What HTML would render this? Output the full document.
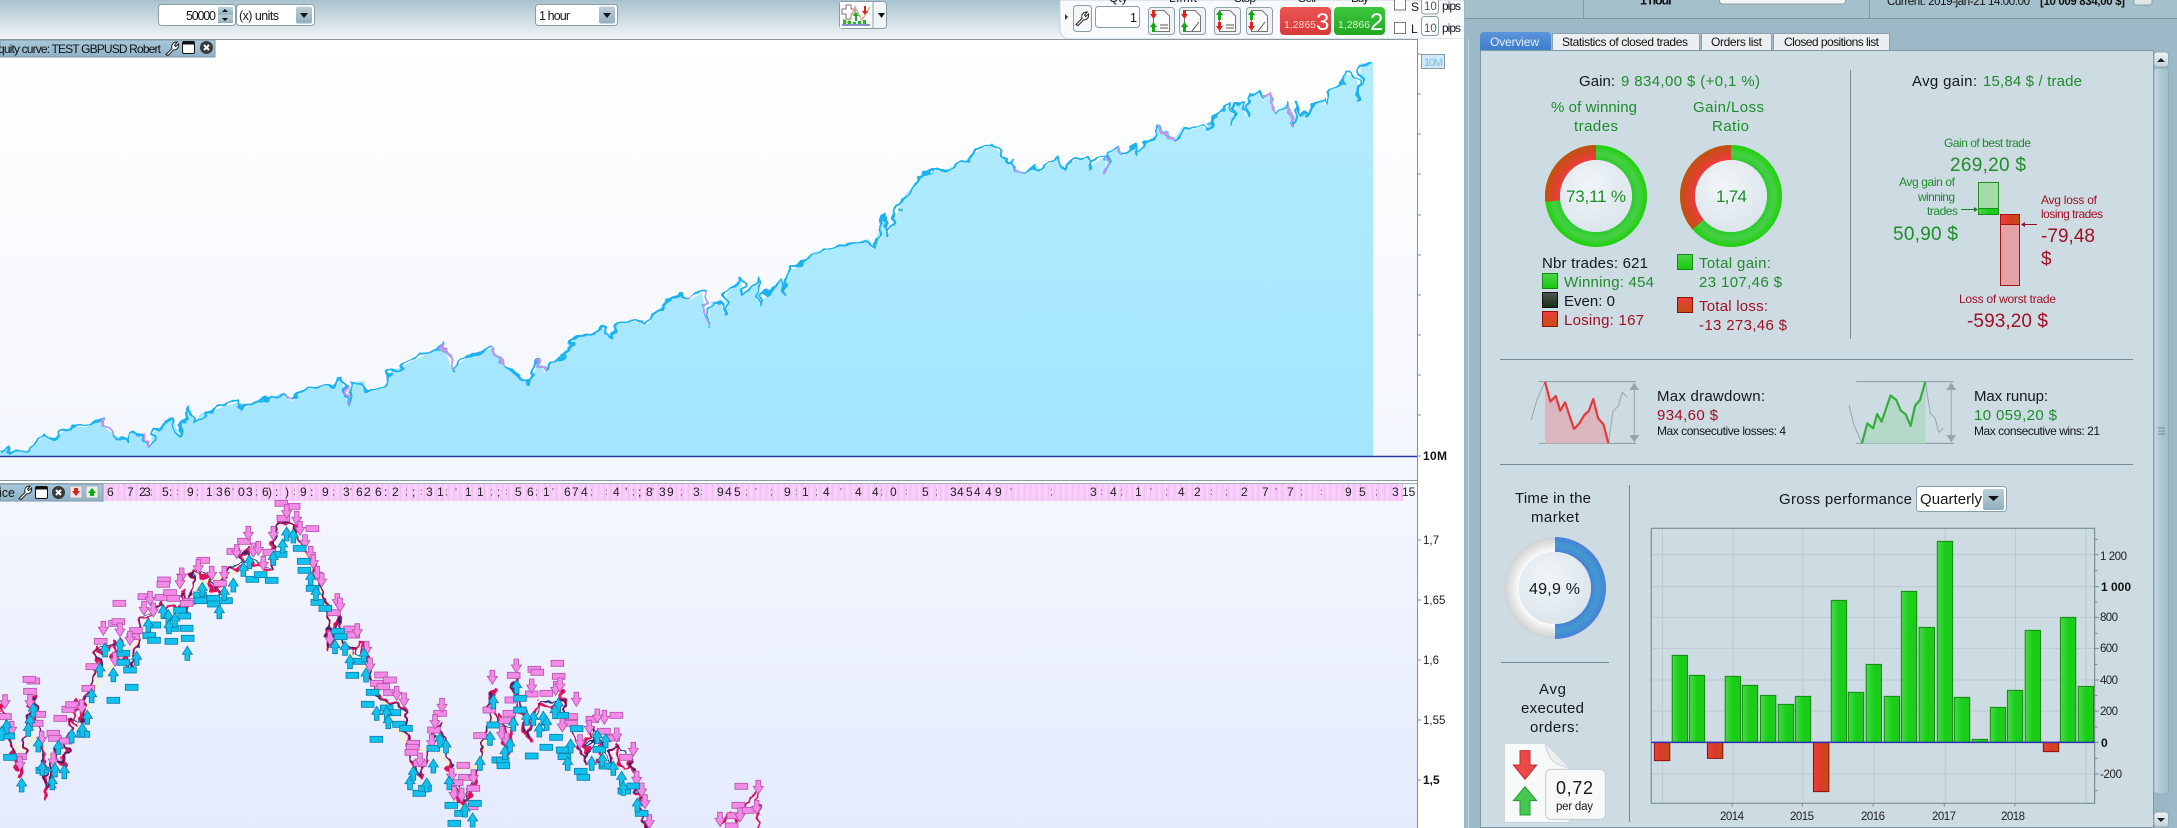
<!DOCTYPE html>
<html><head><meta charset="utf-8"><title>Equity curve report</title>
<style>
html,body{margin:0;padding:0;background:#fff;width:2177px;height:828px;overflow:hidden}
svg{display:block;font-family:"Liberation Sans",Arial,sans-serif}
.g{fill:#1f8c2a}.r{fill:#a01024}.k{fill:#14181c}
.m{font-size:15px}.s{font-size:12px}.b{font-size:19px}.a{font-size:11.5px;fill:#222}
</style></head><body>
<svg width="2177" height="828" viewBox="0 0 2177 828" xmlns="http://www.w3.org/2000/svg">
<defs>
<filter id="jit" filterUnits="userSpaceOnUse" x="0" y="40" width="1417" height="440" color-interpolation-filters="sRGB"><feTurbulence type="fractalNoise" baseFrequency=".07 .09" numOctaves="2" seed="4" result="n"/><feDisplacementMap in="SourceGraphic" in2="n" scale="14" xChannelSelector="R" yChannelSelector="G"/></filter>
<filter id="jit2" filterUnits="userSpaceOnUse" x="-30" y="0" width="2400" height="1100" color-interpolation-filters="sRGB"><feTurbulence type="fractalNoise" baseFrequency=".025 .03" numOctaves="2" seed="9" result="n"/><feDisplacementMap in="SourceGraphic" in2="n" scale="50" xChannelSelector="R" yChannelSelector="G"/></filter>
<linearGradient id="tb" x1="0" y1="0" x2="0" y2="1"><stop offset="0" stop-color="#a7c2ce"/><stop offset="1" stop-color="#f3f6f8"/></linearGradient>
<linearGradient id="c1" x1="0" y1="0" x2="0" y2="1"><stop offset="0" stop-color="#ffffff"/><stop offset="1" stop-color="#f3f6fd"/></linearGradient>
<linearGradient id="c2" x1="0" y1="0" x2="0" y2="1"><stop offset="0" stop-color="#f5f7ff"/><stop offset="1" stop-color="#e4ebfd"/></linearGradient>
<linearGradient id="ar" x1="0" y1="0" x2="0" y2="1"><stop offset="0" stop-color="#b3ecff"/><stop offset="1" stop-color="#a3e6ff"/></linearGradient>
<linearGradient id="tt" x1="0" y1="0" x2="0" y2="1"><stop offset="0" stop-color="#a8c8da"/><stop offset="1" stop-color="#8fb2c8"/></linearGradient>
<linearGradient id="sb" x1="0" y1="0" x2="0" y2="1"><stop offset="0" stop-color="#bdd0da"/><stop offset="1" stop-color="#8fafbf"/></linearGradient>
<linearGradient id="ov" x1="0" y1="0" x2="0" y2="1"><stop offset="0" stop-color="#5b95dc"/><stop offset="1" stop-color="#3e7ccc"/></linearGradient>
<linearGradient id="gb" x1="0" y1="0" x2="1" y2="0"><stop offset="0" stop-color="#4ad84a"/><stop offset=".5" stop-color="#17cf17"/><stop offset="1" stop-color="#22c81e"/></linearGradient>
<linearGradient id="rb" x1="0" y1="0" x2="1" y2="0"><stop offset="0" stop-color="#ee3c3c"/><stop offset=".5" stop-color="#d83a28"/><stop offset="1" stop-color="#c25010"/></linearGradient>
<linearGradient id="gv" x1="0" y1="0" x2="0" y2="1"><stop offset="0" stop-color="#4ad84a"/><stop offset="1" stop-color="#16c810"/></linearGradient>
<linearGradient id="rv" x1="0" y1="0" x2="0" y2="1"><stop offset="0" stop-color="#ee3c3c"/><stop offset="1" stop-color="#c25010"/></linearGradient>
<linearGradient id="kv" x1="0" y1="0" x2="0" y2="1"><stop offset="0" stop-color="#555"/><stop offset="1" stop-color="#103010"/></linearGradient>
<linearGradient id="sell" x1="0" y1="0" x2="0" y2="1"><stop offset="0" stop-color="#ec5454"/><stop offset="1" stop-color="#d83a3a"/></linearGradient>
<linearGradient id="buy" x1="0" y1="0" x2="0" y2="1"><stop offset="0" stop-color="#3ec83e"/><stop offset="1" stop-color="#22a822"/></linearGradient>
<linearGradient id="sc" x1="0" y1="0" x2="1" y2="0"><stop offset="0" stop-color="#c4d9e2"/><stop offset=".5" stop-color="#a9c8d4"/><stop offset="1" stop-color="#9dbecb"/></linearGradient>
<linearGradient id="sbt" x1="0" y1="0" x2="0" y2="1"><stop offset="0" stop-color="#eef3f6"/><stop offset="1" stop-color="#c0d2da"/></linearGradient>
<radialGradient id="g1" gradientUnits="userSpaceOnUse" cx="1596" cy="196" r="51"><stop offset=".7" stop-color="#2ccb2c"/><stop offset=".84" stop-color="#46cf46"/><stop offset="1" stop-color="#1ed008"/></radialGradient>
<radialGradient id="r1" gradientUnits="userSpaceOnUse" cx="1596" cy="196" r="51"><stop offset=".7" stop-color="#ee3a40"/><stop offset="1" stop-color="#c0520c"/></radialGradient>
<radialGradient id="g2" gradientUnits="userSpaceOnUse" cx="1731" cy="196" r="51"><stop offset=".7" stop-color="#2ccb2c"/><stop offset=".84" stop-color="#46cf46"/><stop offset="1" stop-color="#1ed008"/></radialGradient>
<radialGradient id="r2" gradientUnits="userSpaceOnUse" cx="1731" cy="196" r="51"><stop offset=".7" stop-color="#ee3a40"/><stop offset="1" stop-color="#c0520c"/></radialGradient>
<radialGradient id="bl" gradientUnits="userSpaceOnUse" cx="1555" cy="588" r="51"><stop offset=".7" stop-color="#4a80d4"/><stop offset=".84" stop-color="#3f9ad0"/><stop offset="1" stop-color="#4a7fd8"/></radialGradient>
<radialGradient id="gr" gradientUnits="userSpaceOnUse" cx="1555" cy="588" r="51"><stop offset=".7" stop-color="#fdfdfd"/><stop offset=".84" stop-color="#e6e7e8"/><stop offset="1" stop-color="#cdd0d3"/></radialGradient>
<radialGradient id="ce" cx=".4" cy=".35" r=".75"><stop offset="0" stop-color="#f1f5f8"/><stop offset="1" stop-color="#d8e3ea"/></radialGradient>
<pattern id="st" width="6" height="17" patternUnits="userSpaceOnUse"><rect width="6" height="17" fill="#f6cdf8"/><rect x="1" width="1" height="17" fill="#fadcfb"/><rect x="4" width="1" height="17" fill="#f2bff3"/></pattern>
<g id="pr"><rect x="-19" y="-9" width="38" height="18" fill="#f28ae6" stroke="#b652ae" stroke-width="2.5"/></g>
<g id="cr"><rect x="-19" y="-9" width="38" height="18" fill="#12c2ee" stroke="#0c7fa8" stroke-width="2.5"/></g>
<g id="dn"><polygon points="-7,-21 7,-21 7,-3 15,-3 0,21 -15,-3 -7,-3" fill="#f28ae6" stroke="#b652ae" stroke-width="2.5"/></g>
<g id="up"><polygon points="-7,21 7,21 7,3 15,3 0,-21 -15,3 -7,3" fill="#12c2ee" stroke="#0c7fa8" stroke-width="2.5"/></g>
<g id="wr"><path d="M1 13.5 L7 7.5 C6 4 8 .8 12.2 1 L9.6 4 L10.6 5.6 L13.6 3 C14 7 11.2 9.4 8.6 8.8 L3 14.6 Z" fill="#fff" stroke="#222" stroke-width="1"/></g>
<g id="wn"><rect x=".5" y=".5" width="12" height="12" rx="1.5" fill="#fff" stroke="#111"/><rect x=".5" y=".5" width="12" height="3" fill="#111"/></g>
<g id="cl"><circle cx="6.5" cy="6.5" r="6.5" fill="#3a3a3a"/><path d="M4 4 L9 9 M9 4 L4 9" stroke="#fff" stroke-width="2"/></g>
<g id="dc"><rect x=".5" y=".5" width="26" height="27" rx="3" fill="#eef2f4" stroke="#8ea0aa"/><path d="M5.500 3.500 H16 L21.500 9 V24.500 H5.500 Z" fill="#fff" stroke="#777"/></g>
</defs>

<!-- Top toolbar -->
<rect width="1062" height="39" fill="url(#tb)"/>
<path d="M1060 0 V30 Q1060 36 1067 39 H1465 V0 Z" fill="#f8fafb" stroke="#c8d2d8"/>
<rect x="158.500" y="4.500" width="77" height="21" rx="3" fill="#fff" stroke="#8b9ea8"/>
<text x="186" y="20" font-size="12.500" textLength="30" class="k">50000</text>
<rect x="218" y="7" width="15" height="8" fill="url(#sb)"/><rect x="218" y="15" width="15" height="8" fill="url(#sb)"/>
<path d="M222 12 l3-3 3 3Z M222 18 l3 3 3-3Z" fill="#111"/>
<rect x="236.500" y="4.500" width="78" height="21" rx="3" fill="#fff" stroke="#8b9ea8"/>
<text x="239" y="20" font-size="12.500" textLength="40" class="k">(x) units</text>
<rect x="296" y="6.500" width="16" height="17" rx="2" fill="url(#sb)"/><path d="M300 13 h8 l-4 5Z" fill="#111"/>
<rect x="535.500" y="4.500" width="82" height="21" rx="3" fill="#fff" stroke="#8b9ea8"/>
<text x="539" y="20" font-size="12.500" textLength="31" class="k">1 hour</text>
<rect x="599" y="6.500" width="16" height="17" rx="2" fill="url(#sb)"/><path d="M603 13 h8 l-4 5Z" fill="#111"/>
<rect x="839.500" y="1.500" width="47" height="27" rx="3" fill="#f2f5f6" stroke="#8b9ea8"/>
<rect x="840" y="2" width="33" height="26" fill="#fbfcfc"/>
<line x1="873" y1="2" x2="873" y2="28" stroke="#8b9ea8"/>
<path d="M878 13 h7 l-3.500 5Z" fill="#111"/>
<path d="M846 5 h5 v4 h4 v5 h-4 v5 h-5 v-5 h-4 v-5 h4Z" fill="#fff" stroke="#777"/>
<path d="M843 19 L848 23 L855 7 L862 20 L870 7" fill="none" stroke="#d8b090" stroke-width="1.500"/>
<path d="M856 21 v-6" stroke="#2a2" stroke-width="2"/><path d="M853 16 l3-4 3 4Z" fill="#2a2"/>
<path d="M865 6 v6" stroke="#d22" stroke-width="2"/><path d="M862 11 l3 4 3-4Z" fill="#d22"/>
<path d="M843 24 h3 v-4 h-3Z M848 24 h3 v-3 h-3Z M853 24 h3 v-2 h-3Z M858 24 h3 v-3 h-3Z M863 24 h3 v-4 h-3Z" fill="#2b2"/>
<line x1="842" y1="25" x2="870" y2="25" stroke="#22a"/>

<!-- Trade controls -->
<text x="1109" y="2" font-size="12" class="k">Qty</text>
<text x="1169" y="2" font-size="12" textLength="28" class="k">Limit</text>
<text x="1234" y="2" font-size="12" textLength="22" class="k">Stop</text>
<text x="1298" y="2" font-size="12" textLength="18" class="k">Sell</text>
<text x="1351" y="2" font-size="12" textLength="18" class="k">Buy</text>
<path d="M1065 14 l3 3 -3 3Z" fill="#333"/>
<rect x="1073.500" y="5.500" width="18" height="26" rx="3" fill="#f4f7f9" stroke="#8b9ea8"/>
<use href="#wr" x="1075" y="11"/>
<rect x="1095.500" y="6.500" width="44" height="21" rx="3" fill="#fff" stroke="#8b9ea8"/>
<text x="1130" y="22" font-size="12.500" class="k">1</text>
<use href="#dc" x="1148" y="7"/><use href="#dc" x="1179" y="7"/><use href="#dc" x="1214" y="7"/><use href="#dc" x="1246" y="7"/>
<path d="M1152 10 h3 v4 h2 l-3.500 5 -3.500-5 h2Z M1183 10 h3 v4 h2 l-3.500 5 -3.500-5 h2Z M1218 22 h3 v4 h2 l-3.500 5 -3.500-5 h2Z M1250 22 h3 v4 h2 l-3.500 5 -3.500-5 h2Z" fill="#d22"/>
<path d="M1152 32 h3 v-5 h2 l-3.500-5 -3.500 5 h2Z M1183 32 h3 v-5 h2 l-3.500-5 -3.500 5 h2Z M1218 20 h3 v-5 h2 l-3.500-5 -3.500 5 h2Z M1250 20 h3 v-5 h2 l-3.500-5 -3.500 5 h2Z" fill="#1a1"/>
<path d="M1160 25 h8 M1160 28 h8 M1226 25 h8 M1226 28 h8 M1192 31 l7-9 M1258 31 l7-9" stroke="#555" fill="none"/>
<rect x="1280" y="7" width="51" height="28" rx="4" fill="url(#sell)"/>
<text x="1284" y="28" font-size="10.500" fill="#fadada" textLength="32">1,2865</text>
<text x="1316" y="30" font-size="24" fill="#fff" textLength="13">3</text>
<rect x="1334" y="7" width="51" height="28" rx="4" fill="url(#buy)"/>
<text x="1338" y="28" font-size="10.500" fill="#d8f5d8" textLength="32">1,2866</text>
<text x="1370" y="30" font-size="24" fill="#fff" textLength="13">2</text>
<rect x="1394.500" y="-1" width="11" height="11" fill="#fff" stroke="#777"/>
<rect x="1394.500" y="22.500" width="11" height="11" fill="#fff" stroke="#777"/>
<text x="1411" y="11" font-size="12" class="k">S</text><text x="1411" y="33" font-size="12" class="k">L</text>
<rect x="1421.500" y="-6" width="17" height="20" rx="3" fill="#fff" stroke="#8b9ea8"/>
<rect x="1421.500" y="16.500" width="17" height="19" rx="3" fill="#fff" stroke="#8b9ea8"/>
<text x="1424" y="10" font-size="11.500" fill="#555">10</text><text x="1424" y="32" font-size="11.500" fill="#555">10</text>
<text x="1442" y="10" font-size="12" class="k" textLength="19">pips</text><text x="1442" y="32" font-size="12" class="k" textLength="19">pips</text>

<!-- Chart 1 -->
<rect x="0" y="40" width="1417" height="440" fill="url(#c1)"/>
<line x1="0" y1="39.500" x2="1417" y2="39.500" stroke="#8a98a0"/>
<path id="eq" fill="url(#ar)" d="M0 456 L0 453 6 447 11 452 29 450 45 435 54 438 70 427 86 427 101 420 105 428 115 435 128 442 131 433 140 433 150 447 153 433 172 418 180 437 188 409 195 422 201 413 217 409 239 402 242 409 268 398 284 393 292 402 306 388 332 385 341 378 348 405 351 382 364 381 367 392 386 385 390 372 421 357 443 344 452 370 459 363 475 353 491 348 504 365 515 373 529 382 539 362 545 373 548 363 564 357 574 340 606 328 611 340 617 323 641 321 647 325 660 308 676 295 681 293 689 300 702 293 707 323 711 302 721 300 724 315 727 293 740 278 743 293 760 278 759 305 781 278 784 292 788 270 797 268 813 252 823 250 845 245 868 239 872 250 885 215 888 235 905 195 923 174 945 170 965 160 980 150 992 143 1000 153 1007 163 1012 162 1015 169 1025 172 1037 165 1040 170 1058 157 1063 171 1075 160 1088 158 1090 166 1105 156 1106 174 1107 152 1117 146 1123 156 1133 145 1136 152 1155 135 1158 128 1173 138 1177 135 1183 126 1190 130 1203 126 1205 129 1223 110 1230 105 1234 120 1235 106 1243 105 1246 117 1251 93 1259 92 1263 101 1270 93 1275 114 1287 103 1294 127 1296 103 1300 116 1305 111 1307 116 1310 110 1322 98 1325 106 1330 90 1342 85 1344 75 1350 75 1357 80 1359 103 1361 63 1373 62 L1373 456 Z"/>
<g filter="url(#jit)">
<polyline fill="none" stroke="#1cb2ee" stroke-width="2.400" stroke-linejoin="round" points="0,453 6,447 11,452 29,450 45,435 54,438 70,427 86,427 101,420 105,428 115,435 128,442 131,433 140,433 150,447 153,433 172,418 180,437 188,409 195,422 201,413 217,409 239,402 242,409 268,398 284,393 292,402 306,388 332,385 341,378 348,405 351,382 364,381 367,392 386,385 390,372 421,357 443,344 452,370 459,363 475,353 491,348 504,365 515,373 529,382 539,362 545,373 548,363 564,357 574,340 606,328 611,340 617,323 641,321 647,325 660,308 676,295 681,293 689,300 702,293 707,323 711,302 721,300 724,315 727,293 740,278 743,293 760,278 759,305 781,278 784,292 788,270 797,268 813,252 823,250 845,245 868,239 872,250 885,215 888,235 905,195 923,174 945,170 965,160 980,150 992,143 1000,153 1007,163 1012,162 1015,169 1025,172 1037,165 1040,170 1058,157 1063,171 1075,160 1088,158 1090,166 1105,156 1106,174 1107,152 1117,146 1123,156 1133,145 1136,152 1155,135 1158,128 1173,138 1177,135 1183,126 1190,130 1203,126 1205,129 1223,110 1230,105 1234,120 1235,106 1243,105 1246,117 1251,93 1259,92 1263,101 1270,93 1275,114 1287,103 1294,127 1296,103 1300,116 1305,111 1307,116 1310,110 1322,98 1325,106 1330,90 1342,85 1344,75 1350,75 1357,80 1359,103 1361,63 1373,62"/>
<path fill="none" stroke="#ee88e8" stroke-width="1.600" d="M101 420 L105 428 115 435 M143 434 L150 447 M292 402 L286 395 M345 385 L348 405 M443 344 L452 370 M491 348 L504 365 M539 362 L545 373 M689 300 L695 297 M702 293 L707 323 M1158 128 L1173 138 M1263 101 L1270 93 L1275 114 M1287 103 L1294 127 M1105 156 L1106 174 M1123 156 L1117 146 M1015 169 L1025 172"/>
</g>
<line x1="0" y1="456.500" x2="1417" y2="456.500" stroke="#2a3aa2" stroke-width="1.500"/>
<rect x="0" y="40" width="215" height="17" fill="url(#tt)"/><rect x="0" y="40" width="215" height="17" fill="none" stroke="#7d97a8"/>
<text x="-2" y="53" font-size="12" fill="#111" textLength="163">quity curve: TEST GBPUSD Robert</text>
<use href="#wr" x="165" y="41"/><use href="#wn" x="182" y="41"/><use href="#cl" x="200" y="41"/>

<!-- Chart 2 -->
<rect x="0" y="481" width="1417" height="3" fill="#fff"/>
<line x1="0" y1="480.500" x2="1417" y2="480.500" stroke="#8a98a0"/>
<rect x="0" y="484" width="1417" height="344" fill="url(#c2)"/>
<line x1="0" y1="483.500" x2="1417" y2="483.500" stroke="#a5b2ba"/>
<rect x="103" y="484" width="1300" height="17" fill="url(#st)"/>
<rect x="0" y="484" width="103" height="17" fill="url(#tt)" stroke="#7d97a8"/>
<text x="-1" y="497" font-size="12.500" fill="#111">ice</text>
<use href="#wr" x="18" y="485"/><use href="#wn" x="35" y="486"/><use href="#cl" x="52" y="486"/>
<rect x="70" y="486" width="12" height="12" rx="1" fill="#f2e6e6" stroke="#aab"/><path d="M74 488 h4 v3 h2 l-4 5 -4-5 h2Z" fill="#d22"/>
<rect x="86" y="486" width="12" height="12" rx="1" fill="#e8f2e8" stroke="#aab"/><path d="M90 496 h4 v-3 h2 l-4-5 -4 5 h2Z" fill="#1a1"/>
<text y="496" font-size="12" fill="#222" x="107 127 139 144 162 169 187 206 216 224 238 246 262 268 275 285 300 310 322 343 356 364 375 384 392 412 426 437 465 477 497 515 527 543 564 572 581 596 613 625 638 646 659 667 693 717 725 734 784 802 823 855 872 890 922 950 957 966 974 985 995 1032 1090 1110 1135 1178 1194 1241 1262 1287 1345 1359 1392">67235:9136036):)9:93626:2;3111;561674 4';83939459144405345449 34142277953 15</text>
<text y="495" font-size="10" fill="#555" x="150 176 196 232 255 293 332 350 405 420 445 455 490 505 535 552 590 605 632 652 680 700 745 755 770 795 815 840 880 905 935 1010 1050 1100 1120 1150 1165 1210 1225 1275 1300 1320 1375">;:;';:;';:;';:;';:;';:;';:;';:;';:;';:;';:;</text>

<g transform="translate(0,470) scale(.33333)">
<polyline fill="none" stroke="#f6eea0" stroke-width="4" points="30,770 60,860 100,800 150,860 190,830 260,720 300,620 400,530 480,440 560,420 600,340 700,310 800,270 880,170 960,350 1000,500 1100,600 1150,690 1230,850 1300,830 1360,900 1440,890 1480,740"/>
<g filter="url(#jit2)">
<polyline fill="none" stroke="#e0105a" stroke-width="8" stroke-linejoin="round" points="0,720 10,690 20,745 30,800 45,880 55,920 65,860 75,830 85,720 100,680 108,760 120,800 132,850 145,990 155,880 165,830 178,860 190,890 200,800 210,750 222,770 230,690 250,750 265,680 280,620 295,530 310,560 330,520 345,570 360,510 375,580 395,610 410,520 430,440 450,450 480,400 500,430 520,410 535,420 545,350 565,440 585,290 605,330 620,310 635,360 650,370 670,330 690,290 710,300 740,240 760,290 780,290 795,300 810,300 822,210 835,150 860,170 880,160 900,200 915,240 940,300 970,360 985,430 990,540 1003,470 1015,440 1030,520 1045,530 1060,540 1080,515 1100,560 1115,620 1130,680 1160,690 1190,700 1215,720 1225,870 1245,900 1260,925 1285,860 1300,800 1325,750 1340,850 1350,900 1370,980 1390,1000 1415,960 1440,880 1458,780 1475,650 1490,760 1505,740 1525,860 1540,780 1548,630 1565,740 1585,810 1600,720 1620,700 1650,720 1680,670 1700,740 1730,800 1750,885 1765,800 1785,770 1805,880 1825,890 1850,820 1870,900 1895,880 1915,980 1940,1074"/>
<polyline fill="none" stroke="#e0105a" stroke-width="8" points="2160,1074 2185,1030 2210,1060 2270,940 2275,1074"/>
<polyline fill="none" stroke="#1c2a70" stroke-width="3.500" stroke-linejoin="round" points="0,725 20,750 30,805 55,900 75,835 85,725 100,690 120,805 145,960 165,835 190,880 210,755 250,745 280,625 295,540 330,525 360,520 395,600 430,445 480,405 545,370 565,430 585,300 620,315 650,365 690,295 740,250 780,285 810,295 835,160 880,165 915,245 970,365 985,435 990,530 1015,445 1030,515 1060,535 1100,565 1130,685 1190,705 1215,725 1225,865 1260,915 1325,760 1350,890 1390,990 1440,885 1475,665 1490,755 1540,785 1548,645 1585,800 1620,705 1680,680 1730,800 1750,875 1785,780 1825,880 1850,825 1895,880 1940,1074"/>
</g>
<g>
<use href="#pr" x="844" y="100"/><use href="#pr" x="881" y="109"/><use href="#pr" x="937" y="176"/><use href="#pr" x="850" y="145"/><use href="#pr" x="732" y="214"/><use href="#pr" x="700" y="244"/><use href="#pr" x="808" y="247"/><use href="#pr" x="610" y="271"/><use href="#pr" x="492" y="330"/><use href="#pr" x="490" y="343"/><use href="#pr" x="358" y="400"/><use href="#pr" x="433" y="380"/><use href="#pr" x="484" y="382"/><use href="#pr" x="510" y="368"/><use href="#pr" x="568" y="394"/><use href="#pr" x="660" y="340"/><use href="#pr" x="345" y="460"/><use href="#pr" x="355" y="455"/><use href="#pr" x="302" y="514"/><use href="#pr" x="277" y="590"/><use href="#pr" x="265" y="655"/><use href="#pr" x="408" y="482"/><use href="#pr" x="100" y="633"/><use href="#pr" x="88" y="628"/><use href="#pr" x="90" y="664"/><use href="#pr" x="118" y="733"/><use href="#pr" x="205" y="718"/><use href="#pr" x="216" y="704"/><use href="#pr" x="181" y="745"/><use href="#pr" x="160" y="790"/><use href="#pr" x="165" y="805"/><use href="#pr" x="197" y="813"/><use href="#pr" x="60" y="860"/><use href="#pr" x="1002" y="428"/><use href="#pr" x="1050" y="477"/><use href="#pr" x="1143" y="615"/><use href="#pr" x="1170" y="630"/><use href="#pr" x="1130" y="640"/><use href="#pr" x="1170" y="668"/><use href="#pr" x="1240" y="820"/><use href="#pr" x="1238" y="832"/><use href="#pr" x="1234" y="847"/><use href="#pr" x="1302" y="780"/><use href="#pr" x="1320" y="730"/><use href="#pr" x="1468" y="720"/><use href="#pr" x="1390" y="886"/><use href="#pr" x="1395" y="922"/><use href="#pr" x="1370" y="938"/><use href="#pr" x="1420" y="955"/><use href="#pr" x="1415" y="1010"/><use href="#pr" x="1440" y="797"/>
<use href="#pr" x="15" y="740"/><use href="#pr" x="110" y="760"/><use href="#pr" x="400" y="500"/><use href="#pr" x="520" y="385"/><use href="#pr" x="560" y="400"/><use href="#pr" x="1060" y="495"/><use href="#pr" x="1150" y="650"/><use href="#pr" x="1260" y="880"/>
<g id="d8"><use href="#dn" x="745" y="190"/><use href="#dn" x="860" y="125"/><use href="#dn" x="890" y="145"/><use href="#dn" x="820" y="190"/><use href="#dn" x="900" y="175"/><use href="#dn" x="915" y="215"/><use href="#dn" x="932" y="250"/><use href="#dn" x="940" y="275"/><use href="#dn" x="952" y="310"/><use href="#dn" x="965" y="330"/><use href="#dn" x="1012" y="392"/><use href="#dn" x="1020" y="405"/><use href="#dn" x="990" y="505"/><use href="#dn" x="1072" y="482"/><use href="#dn" x="1100" y="535"/><use href="#dn" x="1110" y="585"/><use href="#dn" x="1190" y="670"/><use href="#dn" x="1212" y="690"/><use href="#dn" x="1326" y="706"/><use href="#dn" x="1305" y="755"/><use href="#dn" x="1295" y="815"/><use href="#dn" x="1260" y="870"/><use href="#dn" x="1355" y="915"/><use href="#dn" x="1362" y="970"/><use href="#dn" x="1385" y="975"/><use href="#dn" x="1420" y="920"/><use href="#dn" x="1477" y="622"/><use href="#dn" x="545" y="315"/><use href="#dn" x="540" y="335"/><use href="#dn" x="595" y="290"/><use href="#dn" x="635" y="310"/><use href="#dn" x="673" y="310"/><use href="#dn" x="710" y="245"/><use href="#dn" x="760" y="240"/><use href="#dn" x="775" y="235"/><use href="#dn" x="790" y="280"/><use href="#dn" x="432" y="415"/><use href="#dn" x="450" y="385"/><use href="#dn" x="460" y="420"/><use href="#dn" x="310" y="475"/><use href="#dn" x="360" y="480"/><use href="#dn" x="390" y="505"/><use href="#dn" x="345" y="568"/><use href="#dn" x="245" y="710"/><use href="#dn" x="90" y="695"/><use href="#dn" x="15" y="695"/><use href="#dn" x="35" y="775"/><use href="#dn" x="60" y="880"/><use href="#dn" x="160" y="870"/><use href="#dn" x="125" y="805"/></g>
<use href="#cr" x="899" y="235"/><use href="#cr" x="911" y="274"/><use href="#cr" x="913" y="301"/><use href="#cr" x="938" y="355"/><use href="#cr" x="952" y="397"/><use href="#cr" x="976" y="415"/><use href="#cr" x="1014" y="484"/><use href="#cr" x="1022" y="500"/><use href="#cr" x="1057" y="616"/><use href="#cr" x="1078" y="574"/><use href="#cr" x="1118" y="667"/><use href="#cr" x="1103" y="703"/><use href="#cr" x="1160" y="714"/><use href="#cr" x="1183" y="728"/><use href="#cr" x="1197" y="763"/><use href="#cr" x="1218" y="775"/><use href="#cr" x="1129" y="808"/><use href="#cr" x="1354" y="1006"/><use href="#cr" x="1383" y="1030"/><use href="#cr" x="1363" y="1060"/><use href="#cr" x="1425" y="1000"/><use href="#cr" x="1258" y="970"/><use href="#cr" x="1275" y="955"/><use href="#cr" x="1480" y="765"/><use href="#cr" x="1300" y="835"/><use href="#cr" x="757" y="328"/><use href="#cr" x="782" y="314"/><use href="#cr" x="815" y="331"/><use href="#cr" x="842" y="253"/><use href="#cr" x="600" y="375"/><use href="#cr" x="602" y="392"/><use href="#cr" x="640" y="385"/><use href="#cr" x="642" y="402"/><use href="#cr" x="678" y="392"/><use href="#cr" x="518" y="475"/><use href="#cr" x="560" y="475"/><use href="#cr" x="563" y="505"/><use href="#cr" x="514" y="514"/><use href="#cr" x="448" y="497"/><use href="#cr" x="462" y="511"/><use href="#cr" x="463" y="465"/><use href="#cr" x="540" y="421"/><use href="#cr" x="553" y="438"/><use href="#cr" x="340" y="691"/><use href="#cr" x="395" y="652"/><use href="#cr" x="390" y="600"/><use href="#cr" x="370" y="577"/><use href="#cr" x="370" y="550"/><use href="#cr" x="250" y="793"/><use href="#cr" x="30" y="862"/><use href="#cr" x="25" y="798"/><use href="#cr" x="127" y="901"/><use href="#cr" x="1495" y="870"/>
<g id="u8"><use href="#up" x="860" y="192"/><use href="#up" x="880" y="198"/><use href="#up" x="848" y="228"/><use href="#up" x="820" y="265"/><use href="#up" x="748" y="275"/><use href="#up" x="730" y="298"/><use href="#up" x="700" y="345"/><use href="#up" x="673" y="370"/><use href="#up" x="607" y="358"/><use href="#up" x="658" y="425"/><use href="#up" x="562" y="550"/><use href="#up" x="490" y="425"/><use href="#up" x="505" y="440"/><use href="#up" x="525" y="450"/><use href="#up" x="507" y="470"/><use href="#up" x="445" y="465"/><use href="#up" x="315" y="540"/><use href="#up" x="360" y="525"/><use href="#up" x="300" y="600"/><use href="#up" x="340" y="614"/><use href="#up" x="410" y="565"/><use href="#up" x="275" y="677"/><use href="#up" x="262" y="742"/><use href="#up" x="247" y="780"/><use href="#up" x="215" y="798"/><use href="#up" x="175" y="832"/><use href="#up" x="115" y="825"/><use href="#up" x="100" y="720"/><use href="#up" x="90" y="755"/><use href="#up" x="85" y="778"/><use href="#up" x="20" y="770"/><use href="#up" x="5" y="790"/><use href="#up" x="65" y="945"/><use href="#up" x="127" y="895"/><use href="#up" x="193" y="905"/><use href="#up" x="157" y="938"/><use href="#up" x="165" y="900"/><use href="#up" x="932" y="325"/><use href="#up" x="948" y="370"/><use href="#up" x="1005" y="530"/><use href="#up" x="1035" y="535"/><use href="#up" x="1050" y="575"/><use href="#up" x="1092" y="555"/><use href="#up" x="1098" y="615"/><use href="#up" x="1130" y="730"/><use href="#up" x="1160" y="730"/><use href="#up" x="1165" y="755"/><use href="#up" x="1230" y="938"/><use href="#up" x="1240" y="910"/><use href="#up" x="1280" y="945"/><use href="#up" x="1300" y="888"/><use href="#up" x="1320" y="810"/><use href="#up" x="1338" y="828"/><use href="#up" x="1348" y="938"/><use href="#up" x="1440" y="880"/><use href="#up" x="1470" y="805"/><use href="#up" x="1480" y="695"/><use href="#up" x="1418" y="1050"/><use href="#up" x="1395" y="1020"/></g>
</g>
</g>
<g transform="translate(400,470) scale(.33333)">
<use href="#pr" x="472" y="580"/><use href="#pr" x="403" y="598"/><use href="#pr" x="412" y="607"/><use href="#pr" x="341" y="616"/><use href="#pr" x="476" y="619"/><use href="#pr" x="334" y="690"/><use href="#pr" x="328" y="730"/><use href="#pr" x="316" y="752"/><use href="#pr" x="439" y="670"/><use href="#pr" x="395" y="672"/><use href="#pr" x="649" y="736"/><use href="#pr" x="514" y="740"/><use href="#pr" x="513" y="760"/><use href="#pr" x="577" y="748"/><use href="#pr" x="612" y="784"/><use href="#pr" x="640" y="804"/><use href="#pr" x="678" y="862"/><use href="#pr" x="1024" y="949"/><use href="#pr" x="1015" y="1006"/><use href="#pr" x="1043" y="1021"/><use href="#pr" x="1000" y="1037"/><use href="#pr" x="995" y="1068"/>
<g id="d9"><use href="#dn" x="349" y="588"/><use href="#dn" x="395" y="648"/><use href="#dn" x="467" y="655"/><use href="#dn" x="480" y="645"/><use href="#dn" x="529" y="688"/><use href="#dn" x="613" y="742"/><use href="#dn" x="592" y="738"/><use href="#dn" x="487" y="765"/><use href="#dn" x="568" y="772"/><use href="#dn" x="540" y="815"/><use href="#dn" x="700" y="838"/><use href="#dn" x="650" y="795"/><use href="#dn" x="1075" y="952"/><use href="#dn" x="1070" y="1012"/><use href="#dn" x="960" y="1048"/><use href="#dn" x="1020" y="1035"/><use href="#dn" x="748" y="1055"/><use href="#dn" x="735" y="995"/><use href="#dn" x="725" y="960"/><use href="#dn" x="710" y="925"/><use href="#dn" x="305" y="790"/><use href="#dn" x="320" y="810"/></g>
<use href="#cr" x="360" y="720"/><use href="#cr" x="360" y="685"/><use href="#cr" x="395" y="858"/><use href="#cr" x="439" y="832"/><use href="#cr" x="468" y="802"/><use href="#cr" x="488" y="840"/><use href="#cr" x="493" y="860"/><use href="#cr" x="530" y="776"/><use href="#cr" x="542" y="904"/><use href="#cr" x="550" y="922"/><use href="#cr" x="598" y="838"/><use href="#cr" x="616" y="888"/><use href="#cr" x="673" y="963"/><use href="#cr" x="700" y="948"/><use href="#cr" x="725" y="1030"/><use href="#cr" x="308" y="871"/><use href="#cr" x="310" y="887"/><use href="#cr" x="487" y="736"/>
<use href="#up" x="350" y="650"/><use href="#up" x="475" y="705"/><use href="#up" x="465" y="725"/><use href="#up" x="400" y="745"/><use href="#up" x="430" y="745"/><use href="#up" x="440" y="760"/><use href="#up" x="380" y="745"/><use href="#up" x="418" y="780"/><use href="#up" x="340" y="762"/><use href="#up" x="315" y="848"/><use href="#up" x="330" y="825"/><use href="#up" x="503" y="880"/><use href="#up" x="512" y="828"/><use href="#up" x="575" y="880"/><use href="#up" x="592" y="800"/><use href="#up" x="617" y="812"/><use href="#up" x="607" y="870"/><use href="#up" x="640" y="895"/><use href="#up" x="665" y="925"/><use href="#up" x="670" y="955"/><use href="#up" x="712" y="1005"/>
</g>

<!-- Axis -->
<rect x="1417.500" y="39" width="47" height="789" fill="#fff"/>
<line x1="1417.500" y1="39" x2="1417.500" y2="828" stroke="#7e8f9c"/>
<path d="M1417 54h4M1417 94h4M1417 134h4M1417 174h4M1417 215h4M1417 255h4M1417 295h4M1417 335h4M1417 375h4M1417 415h4M1417 456h4M1417 540h4M1417 600h4M1417 660h4M1417 720h4M1417 780h4" stroke="#7e8f9c"/>
<rect x="1421.500" y="54.500" width="23" height="14" fill="#d3e7fa" stroke="#8a9ba8"/>
<text x="1424" y="66" font-size="11" fill="#6cc6f5" textLength="19">10M</text>
<text x="1423" y="460" font-size="12" font-weight="bold" fill="#111" textLength="24">10M</text>
<text x="1423" y="544" class="a">1,7</text><text x="1423" y="604" class="a">1,65</text><text x="1423" y="664" class="a">1,6</text><text x="1423" y="724" class="a">1,55</text>
<text x="1423" y="784" font-size="12" font-weight="bold" fill="#111">1,5</text>

<!-- Right panel shell -->
<rect x="1464" y="0" width="713" height="828" fill="#9bb9c7"/>
<rect x="1468" y="39" width="1" height="789" fill="#c4d6de"/>
<rect x="1465" y="0" width="712" height="18" fill="#a4c0cb"/>
<line x1="1465" y1="18.500" x2="2177" y2="18.500" stroke="#7f97a3"/>
<path d="M1583.500 0V18M1869.500 0V18" stroke="#7f97a3"/>
<text x="1640" y="4.500" font-size="12.500" font-weight="bold" fill="#111" textLength="33">1 hour</text>
<rect x="1719.500" y="-8" width="126" height="12" rx="3" fill="#f3f5f6" stroke="#8b9ea8"/>
<text x="1887" y="5" font-size="11.500" fill="#111" textLength="143">Current: 2019-jan-21 14:00:00</text>
<text x="2040" y="5" font-size="11.500" font-weight="bold" fill="#111" textLength="85">[10 009 834,00 $]</text>
<rect x="2134" y="-4" width="18" height="9" rx="2" fill="#dfe6ea" stroke="#8b9ea8"/>
<rect x="1480.500" y="50.500" width="673" height="777" fill="#cddbe3" stroke="#7d97a3"/>
<!-- Tabs -->
<path d="M1480 50V36q0-4 4-4h63q4 0 4 4v14Z" fill="url(#ov)"/>
<text x="1490" y="46" font-size="12" fill="#e6f0fa" textLength="49">Overview</text>
<path d="M1552.500 50V33.500h147V50" fill="#eceff1" stroke="#8aa0aa"/>
<text x="1562" y="46" font-size="12" fill="#111" textLength="126">Statistics of closed trades</text>
<path d="M1701.500 50V33.500h70V50" fill="#eceff1" stroke="#8aa0aa"/>
<text x="1711" y="46" font-size="12" fill="#111" textLength="51">Orders list</text>
<path d="M1773.500 50V33.500h116V50" fill="#eceff1" stroke="#8aa0aa"/>
<text x="1784" y="46" font-size="12" fill="#111" textLength="95">Closed positions list</text>
<!-- Scrollbar -->
<rect x="2154" y="51" width="15" height="777" fill="#9ab7c3"/>
<rect x="2154" y="52" width="14.500" height="15" rx="3" fill="url(#sbt)" stroke="#93aab5"/>
<path d="M2157 62h8l-4-4Z" fill="#222"/>
<rect x="2154" y="68" width="14.500" height="726" rx="3" fill="url(#sc)" stroke="#93aab5"/>
<path d="M2158 428h7M2158 431h7M2158 434h7" stroke="#6f8a96"/>
<rect x="2154" y="812" width="14.500" height="15" rx="3" fill="url(#sbt)" stroke="#93aab5"/>
<path d="M2157 818h8l-4 4Z" fill="#222"/>

<!-- Gain summary -->
<text x="1579" y="86" class="m k" textLength="36">Gain:</text>
<text x="1621" y="86" class="m g" textLength="139">9 834,00 $ (+0,1 %)</text>
<text x="1551" y="112" class="m g" textLength="86">% of winning</text>
<text x="1574" y="131" class="m g" textLength="44">trades</text>
<text x="1693" y="112" class="m g" textLength="71">Gain/Loss</text>
<text x="1712" y="131" class="m g" textLength="37">Ratio</text>
<!-- Donut 1 -->
<circle cx="1596" cy="196" r="43.500" fill="none" stroke="url(#g1)" stroke-width="15"/>
<path d="M1596 152.500A43.500 43.500 0 0 0 1552.800 201.150" fill="none" stroke="url(#r1)" stroke-width="15"/>
<circle cx="1596" cy="196" r="36" fill="url(#ce)"/>
<text x="1566" y="202" font-size="17" class="g" textLength="60">73,11 %</text>
<!-- Donut 2 -->
<circle cx="1731" cy="196" r="43.500" fill="none" stroke="url(#g2)" stroke-width="15"/>
<path d="M1731 152.500A43.500 43.500 0 0 0 1698.200 224.500" fill="none" stroke="url(#r2)" stroke-width="15"/>
<circle cx="1731" cy="196" r="36" fill="url(#ce)"/>
<text x="1716" y="202" font-size="17" class="g" textLength="31">1,74</text>
<!-- Legend -->
<text x="1542" y="268" class="m k" textLength="106">Nbr trades: 621</text>
<rect x="1542.500" y="273.500" width="15" height="15" fill="url(#gv)" stroke="#138a13"/>
<text x="1564" y="287" class="m g" textLength="90">Winning: 454</text>
<rect x="1542.500" y="292.500" width="15" height="15" fill="url(#kv)" stroke="#111"/>
<text x="1564" y="306" class="m k" textLength="51">Even: 0</text>
<rect x="1542.500" y="311.500" width="15" height="15" fill="url(#rv)" stroke="#8c1010"/>
<text x="1564" y="325" class="m r" textLength="80">Losing: 167</text>
<rect x="1677.500" y="254.500" width="15" height="15" fill="url(#gv)" stroke="#138a13"/>
<text x="1699" y="268" class="m g" textLength="72">Total gain:</text>
<text x="1699" y="287" class="m g" textLength="83">23 107,46 $</text>
<rect x="1677.500" y="297.500" width="15" height="15" fill="url(#rv)" stroke="#8c1010"/>
<text x="1699" y="311" class="m r" textLength="69">Total loss:</text>
<text x="1699" y="330" class="m r" textLength="88">-13 273,46 $</text>
<line x1="1850.500" y1="70" x2="1850.500" y2="339" stroke="#7a8f9a"/>

<!-- Avg gain -->
<text x="1912" y="86" class="m k" textLength="65">Avg gain:</text>
<text x="1983" y="86" class="m g" textLength="99">15,84 $ / trade</text>
<text x="1944" y="147" class="s g" textLength="87">Gain of best trade</text>
<text x="1950" y="171" class="b g" textLength="76">269,20 $</text>
<text x="1899" y="186" class="s g" textLength="56">Avg gain of</text>
<text x="1918" y="201" class="s g" textLength="37">winning</text>
<text x="1927" y="215" class="s g" textLength="31">trades</text>
<text x="1893" y="240" class="b g" textLength="65">50,90 $</text>
<rect x="1978.500" y="182.500" width="20" height="26" fill="#a5dba8" stroke="#1c8c1c"/>
<rect x="1978.500" y="208.500" width="20" height="6" fill="url(#gb)" stroke="#1c8c1c"/>
<path d="M1961 209.500h15" stroke="#1c7c2c"/><path d="M1978 209.500l-4-2.500v5Z" fill="#1c7c2c"/>
<rect x="2000.500" y="214.500" width="19" height="10" fill="url(#rb)" stroke="#aa1010"/>
<rect x="2000.500" y="224.500" width="19" height="61" fill="#e4a2a4" stroke="#aa1010"/>
<path d="M2037 224.500h-14" stroke="#8c1020"/><path d="M2021 224.500l4-2.500v5Z" fill="#8c1020"/>
<text x="2041" y="204" class="s r" textLength="56">Avg loss of</text>
<text x="2041" y="218" class="s r" textLength="62">losing trades</text>
<text x="2041" y="242" class="b r" textLength="54">-79,48</text>
<text x="2041" y="265" class="b r">$</text>
<text x="1959" y="303" class="s r" textLength="97">Loss of worst trade</text>
<text x="1967" y="327" class="b r" textLength="81">-593,20 $</text>

<path d="M1500 359.500H2133M1500 464.500H2133" stroke="#6f8a96"/>

<!-- Drawdown charts -->
<g transform="translate(1470,340) scale(.44643,.33333)">
<path d="M155 125H372M155 310H372M865 125H1083M865 310H1083" stroke="#8a9aa0" vector-effect="non-scaling-stroke" style="stroke-width:1"/>
<polygon fill="#dcb6be" points="168,125 180,185 192,168 202,212 213,187 233,267 245,250 256,225 266,213 276,177 287,235 299,253 310,310 168,310"/>
<polygon fill="#b5d9c8" points="878,310 890,250 903,265 912,222 922,245 942,166 955,180 965,212 976,223 987,258 997,197 1008,180 1020,125 1020,310"/>
<g fill="none" stroke-linejoin="round">
<polyline points="137,240 150,180 168,125" stroke="#9aa5aa" vector-effect="non-scaling-stroke" style="stroke-width:1"/>
<polyline points="310,310 320,215 333,197 341,157 352,172" stroke="#9aa5aa" vector-effect="non-scaling-stroke" style="stroke-width:1"/>
<polyline points="168,125 180,185 192,168 202,212 213,187 233,267 245,250 256,225 266,213 276,177 287,235 299,253 310,310" stroke="#e43a3c" vector-effect="non-scaling-stroke" style="stroke-width:2.200"/>
<polyline points="849,195 860,255 878,310" stroke="#9aa5aa" vector-effect="non-scaling-stroke" style="stroke-width:1"/>
<polyline points="1020,125 1031,220 1042,235 1050,277 1060,265" stroke="#9aa5aa" vector-effect="non-scaling-stroke" style="stroke-width:1"/>
<polyline points="878,310 890,250 903,265 912,222 922,245 942,166 955,180 965,212 976,223 987,258 997,197 1008,180 1020,125" stroke="#35ad3c" vector-effect="non-scaling-stroke" style="stroke-width:2.200"/>
</g>
<path d="M368 130V305M1078 130V305" stroke="#9aa5aa" vector-effect="non-scaling-stroke" style="stroke-width:1"/>
<path d="M368 128l-11 22h22ZM368 307l-11-22h22ZM1078 128l-11 22h22ZM1078 307l-11-22h22Z" fill="#9aa5aa"/>
</g>
<text x="1657" y="401" class="m k" textLength="108">Max drawdown:</text>
<text x="1657" y="420" class="m r" textLength="61">934,60 $</text>
<text x="1657" y="435" class="s k" textLength="129">Max consecutive losses: 4</text>
<text x="1974" y="401" class="m k" textLength="74">Max runup:</text>
<text x="1974" y="420" class="m g" textLength="83">10 059,20 $</text>
<text x="1974" y="435" class="s k" textLength="126">Max consecutive wins: 21</text>

<!-- Time in market -->
<text x="1515" y="503" class="m k" textLength="76">Time in the</text>
<text x="1531" y="522" class="m k" textLength="48">market</text>
<path d="M1555 544.500A43.500 43.500 0 0 0 1555 631.500" fill="none" stroke="url(#gr)" stroke-width="15"/>
<path d="M1555 544.500A43.500 43.500 0 0 1 1555 631.500" fill="none" stroke="url(#bl)" stroke-width="15"/>
<circle cx="1555" cy="588" r="36" fill="url(#ce)"/>
<text x="1529" y="594" font-size="16" class="k" textLength="51">49,9 %</text>
<line x1="1501" y1="662.500" x2="1609" y2="662.500" stroke="#6f8a96"/>
<text x="1539" y="694" class="m k" textLength="27">Avg</text>
<text x="1521" y="713" class="m k" textLength="63">executed</text>
<text x="1530" y="732" class="m k" textLength="49">orders:</text>
<g transform="translate(1470,480) scale(.33333)">
<path d="M103 790H225L298 865V1027H103Z" fill="#f8f9f9" stroke="#cdd2d5" stroke-width="3"/>
<path d="M225 790C235 840 250 852 298 865" fill="#eceeef" stroke="#cdd2d5" stroke-width="3"/>
<polygon points="150,812 180,812 180,855 200,855 165,898 130,855 150,855" fill="#ec4848" stroke="#c03030" stroke-width="3"/>
<polygon points="150,1005 180,1005 180,962 200,962 165,920 130,962 150,962" fill="#46c84e" stroke="#2a9a3a" stroke-width="3"/>
<rect x="227" y="868" width="179" height="150" rx="15" fill="#f7f8f8" stroke="#c6ccd0" stroke-width="3"/>
</g>
<text x="1556" y="794" font-size="18" class="k" textLength="37">0,72</text>
<text x="1556" y="810" font-size="11.500" class="k" textLength="37">per day</text>
<line x1="1629.500" y1="485" x2="1629.500" y2="822" stroke="#6f8a96"/>

<!-- Gross performance -->
<text x="1779" y="504" class="m k" textLength="133">Gross performance</text>
<rect x="1916.500" y="486.500" width="90" height="25" rx="3" fill="#fff" stroke="#8b9ea8"/>
<text x="1920" y="504" class="m k" textLength="62">Quarterly</text>
<rect x="1983" y="489" width="21" height="21" rx="2" fill="url(#sb)"/>
<path d="M1988 496h11l-5.500 5Z" fill="#111"/>
<g transform="translate(1630,480) scale(.34881,.33333)">
<g stroke="#bccad2" style="stroke-width:1">
<path vector-effect="non-scaling-stroke" d="M61 224H1332M61 320H1332M61 412H1332M61 505H1332M61 600H1332M61 693H1332M61 882H1332M93 145V970M295 145V970M496 145V970M700 145V970M904 145V970M1105 145V970M1308 145V970"/>
</g>
<rect x="61" y="145" width="1271" height="825" fill="none" stroke="#7a8f98" vector-effect="non-scaling-stroke" style="stroke-width:1.200"/>
<g stroke="#138a13" fill="url(#gb)" style="stroke-width:1">
<rect vector-effect="non-scaling-stroke" x="121" y="526" width="44" height="261"/>
<rect vector-effect="non-scaling-stroke" x="170" y="586" width="44" height="201"/>
<rect vector-effect="non-scaling-stroke" x="273" y="589" width="44" height="198"/>
<rect vector-effect="non-scaling-stroke" x="322" y="616" width="44" height="171"/>
<rect vector-effect="non-scaling-stroke" x="374" y="646" width="44" height="141"/>
<rect vector-effect="non-scaling-stroke" x="425" y="673" width="44" height="114"/>
<rect vector-effect="non-scaling-stroke" x="474" y="649" width="44" height="138"/>
<rect vector-effect="non-scaling-stroke" x="577" y="361" width="44" height="426"/>
<rect vector-effect="non-scaling-stroke" x="626" y="637" width="44" height="150"/>
<rect vector-effect="non-scaling-stroke" x="677" y="553" width="44" height="234"/>
<rect vector-effect="non-scaling-stroke" x="729" y="649" width="44" height="138"/>
<rect vector-effect="non-scaling-stroke" x="778" y="334" width="44" height="453"/>
<rect vector-effect="non-scaling-stroke" x="829" y="442" width="44" height="345"/>
<rect vector-effect="non-scaling-stroke" x="881" y="184" width="44" height="603"/>
<rect vector-effect="non-scaling-stroke" x="930" y="652" width="44" height="135"/>
<rect vector-effect="non-scaling-stroke" x="981" y="778" width="44" height="9"/>
<rect vector-effect="non-scaling-stroke" x="1033" y="682" width="44" height="105"/>
<rect vector-effect="non-scaling-stroke" x="1082" y="631" width="44" height="156"/>
<rect vector-effect="non-scaling-stroke" x="1133" y="451" width="44" height="336"/>
<rect vector-effect="non-scaling-stroke" x="1234" y="412" width="44" height="375"/>
<rect vector-effect="non-scaling-stroke" x="1285" y="619" width="44" height="168"/>
</g>
<g stroke="#8c1010" fill="url(#rb)" style="stroke-width:1">
<rect vector-effect="non-scaling-stroke" x="70" y="787" width="44" height="55"/>
<rect vector-effect="non-scaling-stroke" x="222" y="787" width="44" height="48"/>
<rect vector-effect="non-scaling-stroke" x="526" y="787" width="44" height="148"/>
<rect vector-effect="non-scaling-stroke" x="1185" y="787" width="44" height="28"/>
</g>
<path vector-effect="non-scaling-stroke" d="M61 787H1332" stroke="#2a30b0" style="stroke-width:1.500"/>
<path vector-effect="non-scaling-stroke" d="M293 970V979M494 970V979M697 970V979M901 970V979M1103 970V979M1332 224H1344M1332 320H1344M1332 412H1344M1332 505H1344M1332 600H1344M1332 693H1344M1332 787H1344M1332 882H1344M1332 178H1340M1332 272H1340M1332 366H1340M1332 460H1340M1332 553H1340M1332 647H1340M1332 741H1340M1332 835H1340M1332 932H1340" stroke="#74898f" style="stroke-width:1"/>
</g>
<text x="2100" y="560" class="a" textLength="27">1 200</text>
<text x="2101" y="591" font-size="12" font-weight="bold" fill="#111" textLength="30">1 000</text>
<text x="2100" y="621" class="a" textLength="18">800</text>
<text x="2100" y="652" class="a" textLength="18">600</text>
<text x="2100" y="684" class="a" textLength="18">400</text>
<text x="2100" y="715" class="a" textLength="18">200</text>
<text x="2101" y="747" font-size="12" font-weight="bold" fill="#111">0</text>
<text x="2100" y="778" class="a" textLength="22">-200</text>
<text x="1720" y="820" class="a" textLength="24">2014</text>
<text x="1790" y="820" class="a" textLength="24">2015</text>
<text x="1861" y="820" class="a" textLength="24">2016</text>
<text x="1932" y="820" class="a" textLength="24">2017</text>
<text x="2001" y="820" class="a" textLength="24">2018</text>
</svg>
</body></html>
